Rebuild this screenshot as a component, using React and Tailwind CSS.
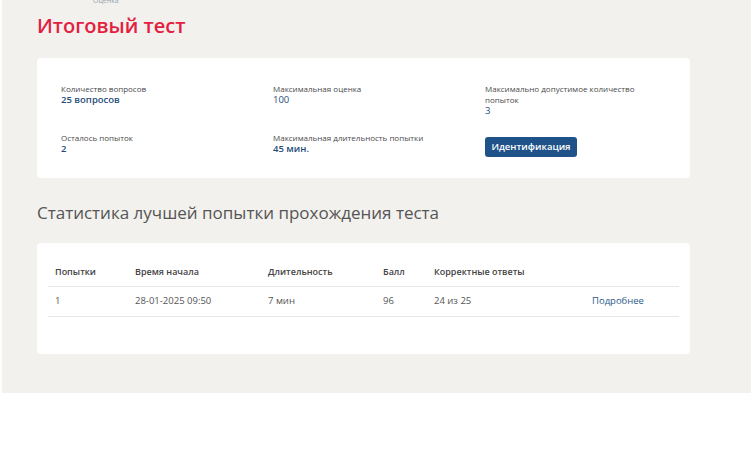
const info = [
  { label: 'Количество вопросов', value: '25 вопросов', bold: true },
  { label: 'Максимальная оценка', value: '100' },
  { label: 'Максимально допустимое количество попыток', value: '3', narrow: true },
  { label: 'Осталось попыток', value: '2', bold: true },
  { label: 'Максимальная длительность попытки', value: '45 мин.', bold: true },
];

const rows = [
  { attempt: '1', start: '28-01-2025 09:50', duration: '7 мин', score: '96', correct: '24 из 25' },
];

export default function App() {
  return (
    <div className="w-[755px] h-[450px] bg-white" style={{ fontFamily: '"Open Sans", "Noto Sans", sans-serif' }}>
      <div className="ml-[2px] w-[749px] h-[393px] bg-[#f2f1ed] px-[35px] overflow-hidden">
        <div className="-mt-[4px] pl-[56px] text-[7px] leading-[9px] text-gray-400">Оценка</div>

        <h1 className="mt-[7px] text-[20px] leading-[28px] font-semibold text-[#e3203f]">
          Итоговый тест
        </h1>

        <div className="mt-[18px] w-[653px] h-[120px] bg-white rounded-[4px] pl-[24px] pt-[25px]">
          <div className="grid grid-cols-[212px_212px_200px]">
            {info.slice(0, 3).map((item) => (
              <div key={item.label} className="h-[49px]">
                <div className={`text-[8px] leading-[11px] text-[#4a4a4a] ${item.narrow ? 'w-[160px]' : ''}`}>
                  {item.label}
                </div>
                <div className={`text-[9.5px] leading-[12px] text-[#1f4e7a] ${item.bold ? 'font-semibold' : ''}`}>
                  {item.value}
                </div>
              </div>
            ))}
            {info.slice(3).map((item) => (
              <div key={item.label}>
                <div className="text-[8px] leading-[11px] text-[#4a4a4a]">{item.label}</div>
                <div className={`text-[9.5px] leading-[12px] text-[#1f4e7a] ${item.bold ? 'font-semibold' : ''}`}>
                  {item.value}
                </div>
              </div>
            ))}
            <div>
              <button
                type="button"
                className="-mt-[3px] w-[92px] h-[20px] rounded-[3px] bg-[#1e5288] text-white text-[9.5px] font-semibold leading-none"
              >
                Идентификация
              </button>
            </div>
          </div>
        </div>

        <h2 className="mt-[23px] text-[17px] leading-[24px] text-[#555]">
          Статистика лучшей попытки прохождения теста
        </h2>

        <div className="mt-[18px] w-[653px] h-[111px] bg-white rounded-[4px] px-[11px] pt-[15px]">
          <table className="w-full table-fixed border-collapse text-left">
            <thead>
              <tr className="border-b border-[#e6e6e6]">
                <th className="w-[87px] h-[28px] pl-[7px] text-[9px] font-semibold text-[#444]">Попытки</th>
                <th className="w-[133px] text-[9px] font-semibold text-[#444]">Время начала</th>
                <th className="w-[115px] text-[9px] font-semibold text-[#444]">Длительность</th>
                <th className="w-[51px] text-[9px] font-semibold text-[#444]">Балл</th>
                <th className="w-[158px] text-[9px] font-semibold text-[#444]">Корректные ответы</th>
                <th></th>
              </tr>
            </thead>
            <tbody>
              {rows.map((r) => (
                <tr key={r.attempt} className="border-b border-[#e6e6e6]">
                  <td className="h-[30px] pl-[7px] text-[9.5px] text-[#555]">{r.attempt}</td>
                  <td className="text-[9.5px] text-[#555]">{r.start}</td>
                  <td className="text-[9.5px] text-[#555]">{r.duration}</td>
                  <td className="text-[9.5px] text-[#555]">{r.score}</td>
                  <td className="text-[9.5px] text-[#555]">{r.correct}</td>
                  <td className="text-[9.5px] text-[#2b5a8c]">Подробнее</td>
                </tr>
              ))}
            </tbody>
          </table>
        </div>
      </div>
    </div>
  );
}
